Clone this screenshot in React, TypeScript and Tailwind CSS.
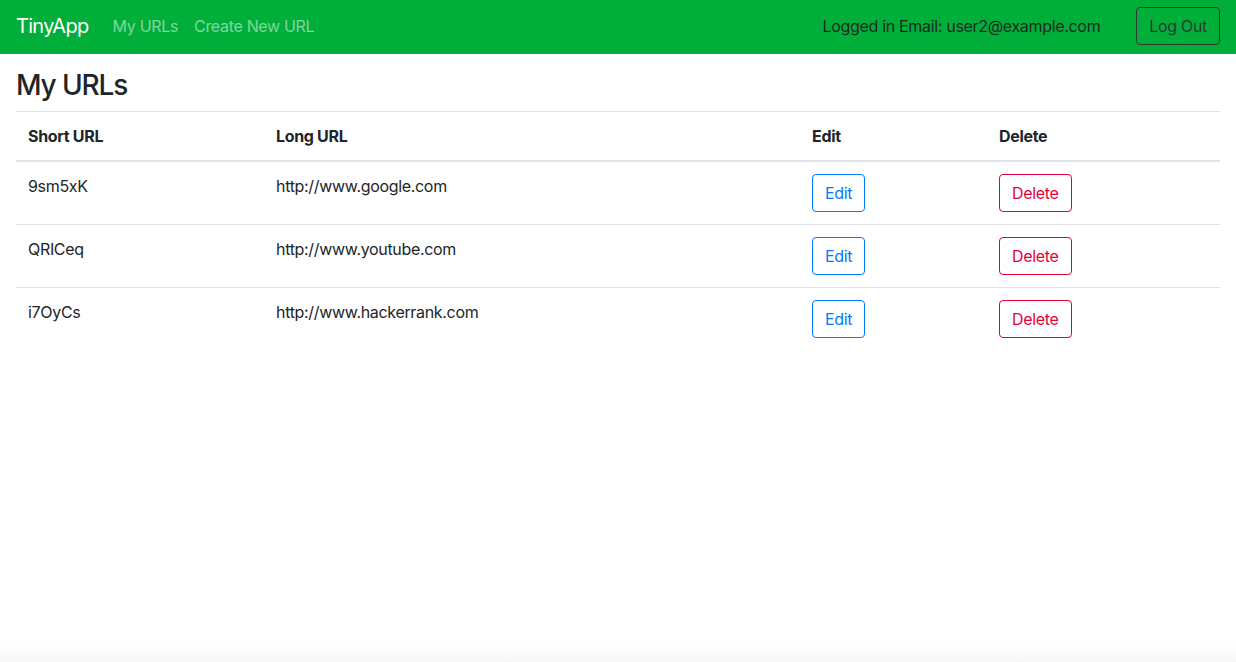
import React from 'react';

interface UrlRow {
  short: string;
  long: string;
}

const urls: UrlRow[] = [
  { short: '9sm5xK', long: 'http://www.google.com' },
  { short: 'QRICeq', long: 'http://www.youtube.com' },
  { short: 'i7OyCs', long: 'http://www.hackerrank.com' },
];

const Navbar: React.FC = () => (
  <nav className="flex items-center h-[54px] px-4 pb-[2px] bg-[#00ae3a]">
    <a className="text-[20px] leading-[30px] tracking-[-0.035em] text-white mr-4">TinyApp</a>
    <ul className="flex">
      <li>
        <a className="block px-2 py-2 text-white/50">My URLs</a>
      </li>
      <li>
        <a className="block px-2 py-2 text-white/50">Create New URL</a>
      </li>
    </ul>
    <div className="ml-auto flex items-center">
      <span className="text-[#1d2a21] mr-9">Logged in Email: user2@example.com</span>
      <button className="h-[38px] px-3 border border-[#2f3a33] rounded text-[#2f3a33]">Log Out</button>
    </div>
  </nav>
);

const App: React.FC = () => {
  return (
    <div className="min-h-screen flex flex-col bg-white text-[#212529] text-base leading-6 tracking-[-0.02em] font-['Inter','Liberation_Sans',sans-serif]">
      <Navbar />
      <main className="flex-grow px-4 mt-[15px]">
        <h3 className="text-[28px] leading-[1.2] font-medium tracking-[-0.04em] mb-2">My URLs</h3>
        <table className="w-full border-collapse">
          <thead>
            <tr className="text-left">
              <th className="w-[248px] p-3 border-t border-b-2 border-[#dee2e6] font-bold">Short URL</th>
              <th className="w-[536px] p-3 border-t border-b-2 border-[#dee2e6] font-bold">Long URL</th>
              <th className="w-[187px] p-3 border-t border-b-2 border-[#dee2e6] font-bold">Edit</th>
              <th className="p-3 border-t border-b-2 border-[#dee2e6] font-bold">Delete</th>
            </tr>
          </thead>
          <tbody>
            {urls.map((u, i) => (
              <tr key={u.short}>
                <td className={`p-3 align-top ${i > 0 ? 'border-t border-[#dee2e6]' : ''}`}>{u.short}</td>
                <td className={`p-3 align-top ${i > 0 ? 'border-t border-[#dee2e6]' : ''}`}>{u.long}</td>
                <td className={`p-3 align-top ${i > 0 ? 'border-t border-[#dee2e6]' : ''}`}>
                  <button className="h-[38px] px-3 border border-[#007bff] rounded text-[#007bff]">Edit</button>
                </td>
                <td className={`p-3 align-top ${i > 0 ? 'border-t border-[#dee2e6]' : ''}`}>
                  <button className="h-[38px] px-3 border border-[#e4003b] rounded text-[#e4003b]">Delete</button>
                </td>
              </tr>
            ))}
          </tbody>
        </table>
      </main>
      <div className="h-[20px] bg-gradient-to-b from-white to-[#f8f8f8]" />
    </div>
  );
};

export default App;
